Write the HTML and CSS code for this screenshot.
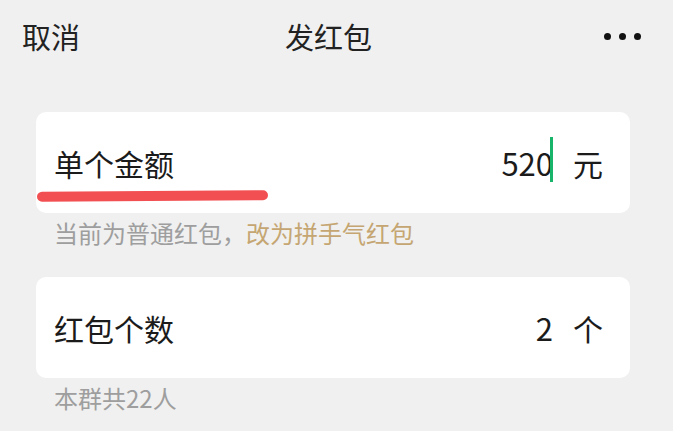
FILE: index.html
```html
<!DOCTYPE html>
<html lang="zh-CN">
<head>
<meta charset="utf-8">
<title>发红包</title>
<link rel="stylesheet" href="styles.css">
</head>
<body>
<div class="page">
  <header class="topbar">
    <span class="cancel">取消</span>
    <span class="title">发红包</span>
    <span class="more"><i></i><i></i><i></i></span>
  </header>
  <main class="content">
    <section class="card">
      <span class="label">单个金额</span>
      <span class="value"><span class="num">520<span class="caret"></span></span><span class="unit">元</span></span>
      <span class="mark"></span>
    </section>
    <p class="hint">当前为普通红包，<span class="link">改为拼手气红包</span></p>
    <section class="card card-second">
      <span class="label">红包个数</span>
      <span class="value"><span class="num">2</span><span class="unit">个</span></span>
    </section>
    <p class="hint">本群共22人</p>
  </main>
</div>
</body>
</html>
```
FILE: styles.css
```css
html, body {
  margin: 0;
  padding: 0;
  background: #f0f0f0;
}
body {
  font-family: "Noto Sans CJK SC", "Noto Sans", sans-serif;
  color: #1b1b1b;
}
.page {
  width: 673px;
  height: 431px;
  overflow: hidden;
}
.topbar {
  display: grid;
  grid-template-columns: 1fr auto 1fr;
  align-items: center;
  height: 72px;
  padding: 0 32px 0 22px;
  font-size: 29px;
  color: #222;
}
.cancel { justify-self: start; }
.title { justify-self: center; padding-left: 0; margin-right: 6px; }
.more {
  justify-self: end;
  display: flex;
  gap: 8px;
  align-items: center;
}
.more i {
  display: block;
  width: 7px;
  height: 7px;
  border-radius: 50%;
  background: #111;
}
.content {
  padding: 40px 43px 0 36px;
}
.card {
  position: relative;
  display: flex;
  align-items: center;
  justify-content: space-between;
  height: 101px;
  padding: 0 27px 0 18px;
  background: #fff;
  border-radius: 10px;
  font-size: 30px;
}
.card-second {
  margin-top: 24px;
}
.label {
  line-height: 1;
}
.value {
  display: flex;
  align-items: center;
  line-height: 1;
}
.num {
  position: relative;
  font-size: 31px;
}
.caret {
  position: absolute;
  right: 0;
  top: -10px;
  width: 3px;
  height: 45px;
  background: #17b46a;
}
.unit {
  margin-left: 20px;
}
.mark {
  position: absolute;
  left: 1px;
  top: 79px;
  width: 231px;
  height: 10px;
  border-radius: 5px;
  background: #f24f52;
  transform: rotate(-0.4deg);
}
.hint {
  margin: 0;
  height: 40px;
  line-height: 40px;
  padding-left: 18px;
  font-size: 24px;
  color: #9e9e9e;
}
.link {
  color: #c5a672;
}
```
